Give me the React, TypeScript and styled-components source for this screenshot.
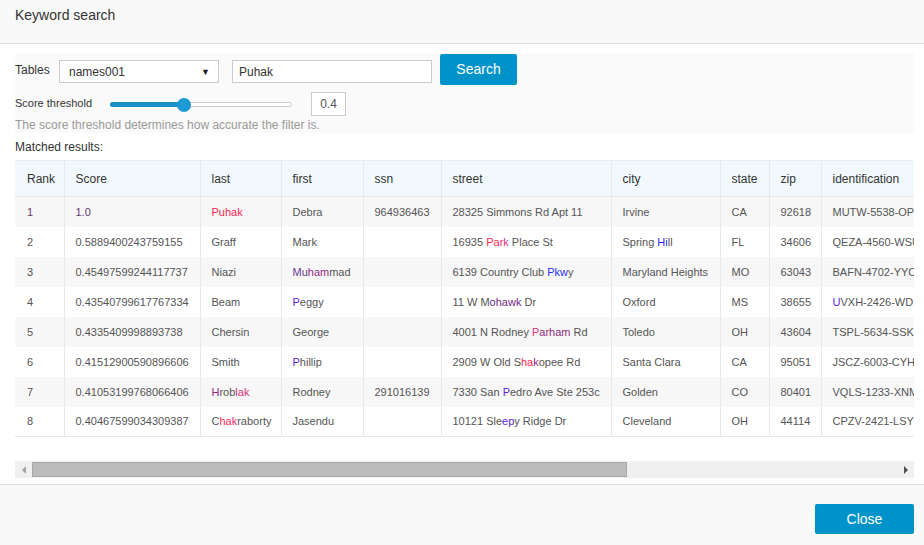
import { createGlobalStyle } from "styled-components";
import styled from "styled-components";

type Seg = string | [string, string];
type Cell = Seg | Seg[];

const R = "#ff1f4f";
const PK = "#e0307a";
const MG = "#8e2a80";
const VI = "#5a1fe0";
const BL = "#2a2aff";

const columns = [
  { title: "Rank", width: 49 },
  { title: "Score", width: 136 },
  { title: "last", width: 81 },
  { title: "first", width: 82 },
  { title: "ssn", width: 78 },
  { title: "street", width: 170 },
  { title: "city", width: 109 },
  { title: "state", width: 49 },
  { title: "zip", width: 52 },
  { title: "identification", width: 502 },
];

const rows: Cell[][] = [
  [["1", "#5e3a6e"], ["1.0", "#5e3a6e"], [["Puhak", R]], "Debra", "964936463", "28325 Simmons Rd Apt 11", "Irvine", "CA", "92618", "MUTW-5538-OPYT"],
  ["2", "0.5889400243759155", "Graff", "Mark", "", ["16935 ", ["Pa", R], ["rk", PK], " Place St"], ["Spring ", ["Hi", BL], "ll"], "FL", "34606", "QEZA-4560-WSUK"],
  ["3", "0.45497599244117737", "Niazi", [["Mu", "#6a3a8a"], ["ham", MG], "mad"], "", ["6139 Country Club ", ["Pkw", BL], "y"], "Maryland Heights", "MO", "63043", "BAFN-4702-YYOC"],
  ["4", "0.43540799617767334", "Beam", [["P", VI], "eggy"], "", ["11 W M", ["ohawk", "#6e2a86"], " Dr"], "Oxford", "MS", "38655", [["U", VI], "VXH-2426-WDIK"]],
  ["5", "0.4335409998893738", "Chersin", "George", "", ["4001 N Rodney ", ["P", PK], ["arham", MG], " Rd"], "Toledo", "OH", "43604", ["TSPL-5634-SSK", ["I", BL]]],
  ["6", "0.41512900590896606", "Smith", [["P", VI], "hillip"], "", ["2909 W Old S", ["ha", R], ["k", MG], "opee Rd"], "Santa Clara", "CA", "95051", "JSCZ-6003-CYHA"],
  ["7", "0.41053199768066406", [["H", MG], "rob", ["lak", PK]], "Rodney", "291016139", ["7330 San ", ["P", VI], "edro Ave Ste 253c"], "Golden", "CO", "80401", "VQLS-1233-XNMR"],
  ["8", "0.40467599034309387", ["C", ["ha", R], ["k", PK], "raborty"], "Jasendu", "", ["10121 Sle", ["ep", VI], "y Ridge Dr"], "Cleveland", "OH", "44114", "CPZV-2421-LSYE"],
];

function renderSeg(seg: Seg, i: number) {
  if (typeof seg === "string") return <span key={i}>{seg}</span>;
  return (
    <Mark key={i} $color={seg[1]}>
      {seg[0]}
    </Mark>
  );
}

function renderCell(cell: Cell) {
  if (typeof cell === "string") return cell;
  if (cell.length === 2 && typeof cell[0] === "string" && typeof cell[1] === "string" && cell[1].startsWith("#")) {
    return renderSeg(cell as [string, string], 0);
  }
  return (cell as Seg[]).map(renderSeg);
}

const threshold = 0.4;
const viewWidth = 899;
const tableWidth = 1308;

export default function App() {
  return (
    <>
      <GlobalStyle />
      <Modal>
        <Header>Keyword search</Header>
        <Body>
          <FormPanel>
            <FormRow>
              <Label>Tables</Label>
              <FakeSelect>
                <span>names001</span>
                <Caret>▼</Caret>
              </FakeSelect>
              <TextInput defaultValue="Puhak" />
              <PrimaryButton>Search</PrimaryButton>
            </FormRow>
            <SliderRow>
              <SmallLabel>Score threshold</SmallLabel>
              <Slider>
                <Fill style={{ width: `${threshold * 100}%` }} />
                <Thumb style={{ left: `${threshold * 100}%` }} />
              </Slider>
              <ValueBox>{threshold}</ValueBox>
            </SliderRow>
            <Help>The score threshold determines how accurate the filter is.</Help>
          </FormPanel>
          <ResultsTitle>Matched results:</ResultsTitle>
          <TableView>
            <Table>
              <colgroup>
                {columns.map((c) => (
                  <col key={c.title} style={{ width: c.width }} />
                ))}
              </colgroup>
              <thead>
                <tr>
                  {columns.map((c) => (
                    <Th key={c.title}>{c.title}</Th>
                  ))}
                </tr>
              </thead>
              <tbody>
                {rows.map((r, i) => (
                  <Tr key={i} $odd={i % 2 === 0}>
                    {r.map((cell, j) => (
                      <Td key={j}>{renderCell(cell)}</Td>
                    ))}
                  </Tr>
                ))}
              </tbody>
            </Table>
          </TableView>
          <ScrollBar>
            <ArrowButton>
              <Arrow $dir="left" />
            </ArrowButton>
            <Track>
              <ScrollThumb style={{ width: `${(viewWidth / tableWidth) * 100}%` }} />
            </Track>
            <ArrowButton>
              <Arrow $dir="right" />
            </ArrowButton>
          </ScrollBar>
        </Body>
        <Footer>
          <PrimaryButton $wide>Close</PrimaryButton>
        </Footer>
      </Modal>
    </>
  );
}

const GlobalStyle = createGlobalStyle`
  html, body {
    margin: 0;
    padding: 0;
    background: #fff;
    font-family: "Liberation Sans", Arial, sans-serif;
  }
  * { box-sizing: border-box; }
`;

const Modal = styled.div`
  width: 924px;
  height: 545px;
  display: flex;
  flex-direction: column;
  background: #fff;
  overflow: hidden;
`;

const Header = styled.div`
  height: 44px;
  flex-shrink: 0;
  background: #f9f9f9;
  border-bottom: 1px solid #dcdcdc;
  padding: 7px 15px 0;
  font-size: 14px;
  color: #333;
  line-height: 16px;
`;

const Body = styled.div`
  flex: 1;
  padding: 9px 10px 0 15px;
  display: flex;
  flex-direction: column;
`;

const FormPanel = styled.div`
  background: #fafafa;
  height: 80px;
  display: flex;
  flex-direction: column;
`;

const FormRow = styled.div`
  display: flex;
  align-items: flex-start;
  height: 32px;
`;

const Label = styled.span`
  font-size: 12px;
  color: #333;
  margin-top: 10px;
  width: 44px;
`;

const FakeSelect = styled.div`
  width: 160px;
  height: 23px;
  margin-top: 7px;
  border: 1px solid #ccc;
  background: #fff;
  display: flex;
  align-items: center;
  justify-content: space-between;
  padding: 0 8px 0 9px;
  font-size: 12px;
  color: #333;
`;

const Caret = styled.span`
  font-size: 9px;
  color: #222;
`;

const TextInput = styled.input`
  width: 200px;
  height: 23px;
  margin: 7px 0 0 13px;
  border: 1px solid #ccc;
  background: #fff;
  padding: 0 6px;
  font-family: inherit;
  font-size: 12px;
  color: #333;
  outline: none;
`;

const PrimaryButton = styled.button<{ $wide?: boolean }>`
  width: ${(p) => (p.$wide ? 99 : 77)}px;
  height: ${(p) => (p.$wide ? 30 : 31)}px;
  margin-left: ${(p) => (p.$wide ? 0 : 8)}px;
  margin-top: ${(p) => (p.$wide ? 0 : 1)}px;
  padding: 0 0 ${(p) => (p.$wide ? 0 : 2)}px;
  border: 0;
  border-radius: 2px;
  background: #0093c9;
  color: #fff;
  font-family: inherit;
  font-size: 14px;
  cursor: pointer;
`;

const SliderRow = styled.div`
  display: flex;
  align-items: center;
  height: 31px;
  padding-top: 7px;
`;

const SmallLabel = styled.span`
  font-size: 11px;
  color: #333;
  width: 95px;
  margin-top: -2px;
`;

const Slider = styled.div`
  position: relative;
  width: 182px;
  height: 5px;
  margin-top: 0;
  border: 1px solid #ccc;
  border-radius: 3px;
  background: #fff;
`;

const Fill = styled.div`
  height: 5px;
  margin: -1px 0 0 -1px;
  border-radius: 3px 0 0 3px;
  background: #1a8fc8;
`;

const Thumb = styled.div`
  position: absolute;
  top: -5px;
  width: 14px;
  height: 14px;
  margin-left: -6px;
  border-radius: 50%;
  background: #1b9ad3;
`;

const ValueBox = styled.div`
  width: 35px;
  height: 24px;
  margin-left: 19px;
  border: 1px solid #ccc;
  background: #fff;
  display: flex;
  align-items: center;
  justify-content: center;
  font-size: 12px;
  color: #555;
`;

const Help = styled.div`
  font-size: 12px;
  color: #999;
  margin-top: 2px;
`;

const ResultsTitle = styled.div`
  font-size: 12px;
  color: #333;
  padding: 7px 0 6px;
`;

const TableView = styled.div`
  width: ${viewWidth}px;
  overflow: hidden;
`;

const Table = styled.table`
  width: ${tableWidth}px;
  table-layout: fixed;
  border-collapse: collapse;
  margin-bottom: 24px;
  border-bottom: 1px solid #e6e6e6;
`;

const Th = styled.th`
  height: 36px;
  padding: 0 11px;
  text-align: left;
  font-weight: normal;
  font-size: 12px;
  color: #333;
  background: #f2f9fd;
  border-top: 1px solid #e6eef2;
  border-bottom: 1px solid #e8e8e8;
  border-left: 1px solid #e8e8e8;
  white-space: nowrap;
  &:first-child {
    border-left: 0;
    padding-left: 12px;
  }
`;

const Tr = styled.tr<{ $odd: boolean }>`
  background: ${(p) => (p.$odd ? "#f7f7f7" : "#fff")};
`;

const Td = styled.td`
  height: 30px;
  padding: 0 11px;
  font-size: 11px;
  color: #555;
  border-left: 1px solid #e8e8e8;
  white-space: nowrap;
  overflow: hidden;
  &:first-child {
    border-left: 0;
    padding-left: 12px;
  }
`;

const Mark = styled.span<{ $color: string }>`
  color: ${(p) => p.$color};
`;

const ScrollBar = styled.div`
  width: ${viewWidth}px;
  height: 17px;
  display: flex;
  background: #f0f0f0;
`;

const ArrowButton = styled.div`
  width: 17px;
  height: 17px;
  display: flex;
  align-items: center;
  justify-content: center;
  flex-shrink: 0;
`;

const Arrow = styled.span<{ $dir: "left" | "right" }>`
  width: 0;
  height: 0;
  border-top: 4px solid transparent;
  border-bottom: 4px solid transparent;
  ${(p) =>
    p.$dir === "left"
      ? "border-right: 4px solid #a3a3a3;"
      : "border-left: 4px solid #505050;"}
`;

const Track = styled.div`
  flex: 1;
  padding: 1px 0;
  display: flex;
`;

const ScrollThumb = styled.div`
  height: 15px;
  background: #bcbcbc;
  border: 1px solid #a8a8a8;
`;

const Footer = styled.div`
  height: 61px;
  flex-shrink: 0;
  background: #f9f9f9;
  border-top: 1px solid #dcdcdc;
  display: flex;
  justify-content: flex-end;
  align-items: flex-start;
  padding: 19px 10px 0 0;
`;
